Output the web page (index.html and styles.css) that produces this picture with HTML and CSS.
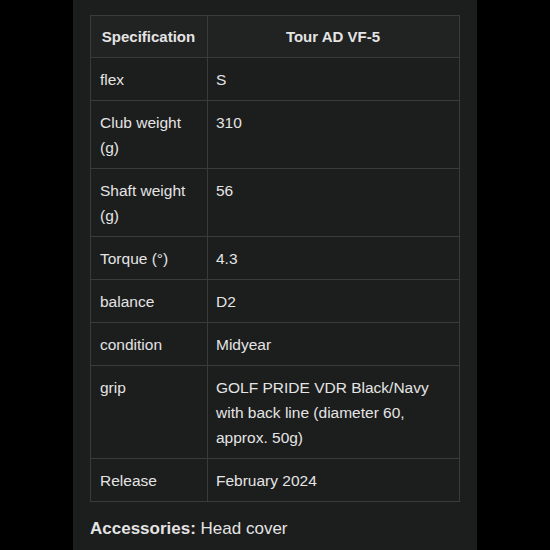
FILE: index.html
```html
<!DOCTYPE html>
<html>
<head>
<meta charset="utf-8">
<link rel="stylesheet" href="styles.css">
</head>
<body>
<div class="panel">
  <table class="spec">
    <thead>
      <tr><th class="c1">Specification</th><th>Tour AD VF-5</th></tr>
    </thead>
    <tbody>
      <tr><td>flex</td><td>S</td></tr>
      <tr><td>Club weight (g)</td><td>310</td></tr>
      <tr><td>Shaft weight (g)</td><td>56</td></tr>
      <tr><td>Torque (°)</td><td>4.3</td></tr>
      <tr><td>balance</td><td>D2</td></tr>
      <tr><td>condition</td><td>Midyear</td></tr>
      <tr><td>grip</td><td>GOLF PRIDE VDR Black/Navy with back line (diameter 60, approx. 50g)</td></tr>
      <tr><td>Release</td><td>February 2024</td></tr>
    </tbody>
  </table>
  <p class="acc"><strong>Accessories:</strong> Head cover</p>
</div>
</body>
</html>
```

FILE: styles.css
```css
html, body {
  margin: 0;
  padding: 0;
  background: #000;
}
body {
  font-family: "Liberation Sans", Arial, sans-serif;
  color: #e4e4e4;
}
.panel {
  width: 404px;
  height: 550px;
  margin-left: 73px;
  box-sizing: border-box;
  padding: 15px 17px 0 17px;
  background: #1c1d1d;
  overflow: hidden;
}
.spec {
  width: 370px;
  border-collapse: collapse;
  border: 1px solid #3a3a3a;
  font-size: 15.5px;
  line-height: 25px;
}
.spec th, .spec td {
  border: 1px solid #3a3a3a;
  text-align: left;
  vertical-align: top;
  padding: 9px 9px 8px 8px;
  font-weight: normal;
}
.spec th {
  background: #212222;
  font-weight: bold;
  text-align: center;
  font-size: 15px;
  padding-top: 8px;
  padding-bottom: 8px;
}
.spec .c1 {
  width: 98px;
}
.spec td:first-child {
  width: 98px;
  padding-left: 9px;
}
.acc {
  margin: 14px 0 0 0;
  font-size: 17px;
  line-height: 25px;
}
.acc strong {
  font-weight: bold;
}
```
